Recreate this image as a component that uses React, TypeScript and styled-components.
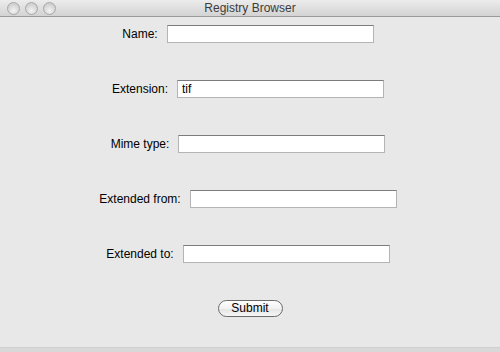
import styled, { createGlobalStyle } from "styled-components";

const GlobalStyle = createGlobalStyle`
  html, body {
    margin: 0;
    padding: 0;
    background: #e8e8e8;
  }
  body {
    font-family: "Liberation Sans", Arial, sans-serif;
  }
`;

const Window = styled.div`
  width: 500px;
  height: 352px;
  display: flex;
  flex-direction: column;
  background: #e8e8e8;
  overflow: hidden;
`;

const TitleBar = styled.div`
  position: relative;
  height: 16px;
  flex: 0 0 16px;
  border-bottom: 1px solid #9a9a9a;
  background: linear-gradient(#ececec, #d3d3d3);
  display: flex;
  align-items: center;
  justify-content: center;
`;

const Lights = styled.div`
  position: absolute;
  left: 7px;
  top: 2px;
  display: flex;
  gap: 5px;
`;

const Light = styled.span`
  width: 11px;
  height: 11px;
  border-radius: 50%;
  border: 1px solid #a8a8a8;
  background: radial-gradient(circle at 50% 70%, #f4f4f4, #d0d0d0 70%);
`;

const Title = styled.div`
  font-size: 12px;
  color: #3c3c3c;
  line-height: 16px;
`;

const Content = styled.div`
  display: grid;
  grid-template-rows: repeat(6, 55px);
  flex: 0 0 330px;
`;

const Row = styled.div<{ $shift?: number }>`
  display: flex;
  justify-content: center;
  align-items: flex-start;
  gap: 9px;
  padding-top: 8px;
  padding-right: ${(p) => (p.$shift ?? 0) * -1}px;
  padding-left: ${(p) => Math.max(p.$shift ?? 0, 0)}px;
`;

const Label = styled.label`
  height: 18px;
  display: flex;
  align-items: center;
  font-size: 12px;
  color: #000;
`;

const Field = styled.input`
  box-sizing: border-box;
  width: 207px;
  height: 18px;
  margin: 0;
  padding: 0 4px;
  border: 1px solid #b4b4b4;
  border-top-color: #7c7c7c;
  background: #fff;
  font-family: "Liberation Sans", Arial, sans-serif;
  font-size: 12px;
  color: #000;
  outline: none;
`;

const Button = styled.button`
  box-sizing: border-box;
  width: 65px;
  height: 17px;
  margin: 0;
  padding: 0;
  border: 1px solid #6a6a6a;
  border-radius: 9px;
  background: linear-gradient(#ffffff, #f2f2f2 50%, #e4e4e4 51%, #f6f6f6);
  font-family: "Liberation Sans", Arial, sans-serif;
  font-size: 12px;
  color: #000;
  line-height: 15px;
`;

const Footer = styled.div`
  flex: 1;
  border-top: 1px solid #d0d0d0;
  background: #d8d8d8;
`;

const fields = [
  { label: "Name:", value: "" },
  { label: "Extension:", value: "tif" },
  { label: "Mime type:", value: "" },
  { label: "Extended from:", value: "" },
  { label: "Extended to:", value: "" },
];

export default function App() {
  return (
    <>
      <GlobalStyle />
      <Window>
        <TitleBar>
          <Lights>
            <Light />
            <Light />
            <Light />
          </Lights>
          <Title>Registry Browser</Title>
        </TitleBar>
        <Content>
          {fields.map((f) => (
            <Row key={f.label} $shift={-4}>
              <Label>{f.label}</Label>
              <Field defaultValue={f.value} />
            </Row>
          ))}
          <Row $shift={0}>
            <Button>Submit</Button>
          </Row>
        </Content>
        <Footer />
      </Window>
    </>
  );
}
